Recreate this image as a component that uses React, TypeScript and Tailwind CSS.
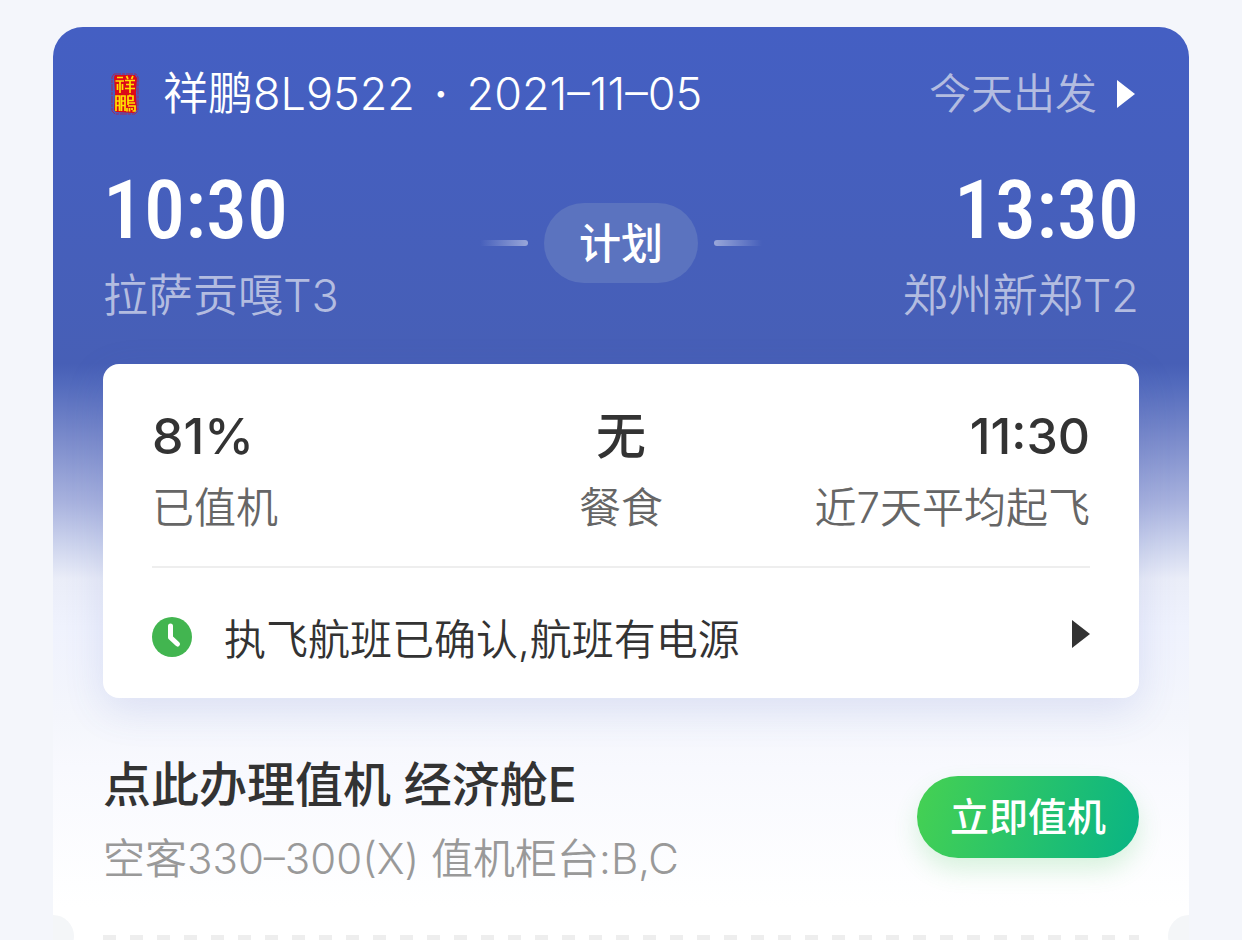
import type { ReactNode } from "react";

function Triangle({ className }: { className: string }) {
  return (
    <svg viewBox="0 0 18 28" className={className} fill="currentColor" aria-hidden="true">
      <path d="M0 0 L18 14 L0 28 Z" />
    </svg>
  );
}

function AirlineLogo() {
  return (
    <svg viewBox="0 0 28 42" className="h-[42px] w-7" aria-hidden="true">
      <path
        d="M3 1 H25 L27 4 V38 L24 41 H4 L1 38 V4 Z"
        fill="none"
        stroke="#a3285c"
        strokeWidth="1"
        strokeDasharray="7 1 3 1"
      />
      <path d="M4 2 L24 2 L26 5 L25 20 L26 37 L23 40 L5 39 L3 37 L4 20 L3 4 Z" fill="#dc0a18" />
      <g stroke="#ffe100" strokeWidth="1.7" fill="none">
        {/* 祥 */}
        <path d="M6 4.5 H12 M4.5 8 H13 M9 8 V20 M6.5 11 V17 M11.5 11 V17" />
        <path d="M15.5 3 L17 6 M22 3 L20.5 6 M14 7.5 H24 M15 11.5 H23 M14 15.5 H24 M19 7 V20" />
        {/* 鹏 */}
        <path d="M5 38 V23 H8.5 V38 M5 28 H8.5 M5 32.5 H8.5 M10.5 38 V23 H14 V38 M10.5 28 H14 M10.5 32.5 H14" />
        <path d="M17 32 V23 H22 V27.5 H17 M19 21.5 V23 M17 30 H24 M17 33 H24 V38 H21.5 M16 35 V38.5 M18.5 35 V38.5 M21 35 V37" />
      </g>
    </svg>
  );
}

function ClockIcon() {
  return (
    <svg viewBox="0 0 40 40" className="size-10 shrink-0" aria-hidden="true">
      <circle cx="20" cy="20" r="20" fill="#42b550" />
      <path
        d="M18.5 9 V20.5 L25.5 27"
        fill="none"
        stroke="#fff"
        strokeWidth="5"
        strokeLinecap="round"
        strokeLinejoin="round"
      />
    </svg>
  );
}

interface StopProps {
  time: string;
  airport: string;
  className?: string;
}

function Stop({ time, airport, className = "" }: StopProps) {
  return (
    <div className={`flex flex-col ${className}`}>
      <span className="font-['Roboto_Condensed','Roboto',sans-serif] text-[82px] leading-[92px] font-medium text-white">
        {time}
      </span>
      <span className="mt-2 text-[45px] leading-[64px] text-[#b3bce0]">{airport}</span>
    </div>
  );
}

interface StatProps {
  value: string;
  label: ReactNode;
  className?: string;
}

function Stat({ value, label, className = "" }: StatProps) {
  return (
    <div className={`flex flex-1 flex-col whitespace-nowrap ${className}`}>
      <span className="text-[50px] leading-[72px] font-medium text-[#333]">{value}</span>
      <span className="text-[42px] leading-[72px] text-[#666]">{label}</span>
    </div>
  );
}

export default function App() {
  return (
    <main className="flex min-h-screen flex-col bg-[#f4f6fb] px-[53px] pt-[27px] font-['Inter','Noto_Sans_CJK_SC',sans-serif] font-[350]">
      <section className="relative flex flex-1 flex-col overflow-hidden rounded-t-[30px] bg-[linear-gradient(180deg,#445fc3_0px,#475fb6_337px,#5169bc_355px,#7d8dcc_415px,#a8b2de_475px,#cdd4ed_518px,#eaedf8_552px,#eff2fd_600px,#f4f6fc_690px,#f8f9fe_740px,#ffffff_880px)] px-[50px]">
        <header className="mt-[35px] flex h-16 items-center justify-between pr-1 pl-2">
          <div className="flex items-center gap-6">
            <AirlineLogo />
            <h1 className="flex gap-[19px] text-[45px] leading-[64px] font-[350] text-white">
              <span>祥鹏8L9522</span>
              <span className="font-medium">·</span>
              <span>2021–11–05</span>
            </h1>
          </div>
          <a href="#detail" className="flex items-center gap-5 text-[42px] leading-[64px] text-[#b3bce0]">
            今天出发
            <Triangle className="h-7 w-[18px] text-white" />
          </a>
        </header>

        {/* Departure / arrival */}
        <div className="mt-[38px] flex items-start justify-between">
          <Stop time="10:30" airport="拉萨贡嘎T3" className="flex-1" />
          <div className="mt-[39px] flex items-center gap-4">
            <span className="h-1.5 w-12 rounded-r-sm bg-linear-to-l from-white/45 to-transparent" />
            <span className="flex h-20 w-[154px] items-center justify-center rounded-full bg-[#5b73bf] text-[42px] font-medium text-white">
              计划
            </span>
            <span className="h-1.5 w-12 rounded-l-sm bg-linear-to-r from-white/45 to-transparent" />
          </div>
          <Stop time="13:30" airport="郑州新郑T2" className="flex-1 items-end" />
        </div>

        <div className="mt-[36px] rounded-2xl bg-white px-[49px] shadow-[0_12px_40px_rgba(70,90,190,0.14)]">
          <div className="flex border-b-2 border-[#eee] pt-9 pb-[22px]">
            <Stat value="81%" label="已值机" />
            <Stat value="无" label="餐食" className="items-center" />
            <Stat value="11:30" label="近7天平均起飞" className="items-end" />
          </div>
          <a href="#status" className="flex h-[130px] items-center pt-2 text-[#333]">
            <ClockIcon />
            <span className="ml-8 flex-1 pt-1 text-[42px]">执飞航班已确认,航班有电源</span>
            <Triangle className="mb-1.5 h-7 w-[18px]" />
          </a>
        </div>

        {/* Check-in */}
        <div className="mt-[50px] flex items-start justify-between">
          <div>
            <h2 className="text-[48px] leading-[74px] font-medium text-[#333]">点此办理值机 经济舱E</h2>
            <p className="text-[42px] leading-[74px] text-[#999]">空客330–300(X) 值机柜台:B,C</p>
          </div>
          <button
            type="button"
            className="mt-7 h-[82px] w-[222px] rounded-full bg-linear-[105deg,#46d152,#08b485] text-[39px] font-medium text-white shadow-[0_12px_24px_rgba(70,200,90,0.2)]"
          >
            立即值机
          </button>
        </div>

        {/* Ticket tear line */}
        <div className="mt-auto h-[5px] border-b border-transparent bg-[repeating-linear-gradient(90deg,#eee_0px,#eee_13px,transparent_13px,transparent_27px)]" />
        <span className="absolute -bottom-[17px] -left-[21px] size-[42px] rounded-full bg-[#f4f6f8]" />
        <span className="absolute -right-[21px] -bottom-[17px] size-[42px] rounded-full bg-[#f4f6f8]" />
      </section>
    </main>
  );
}
